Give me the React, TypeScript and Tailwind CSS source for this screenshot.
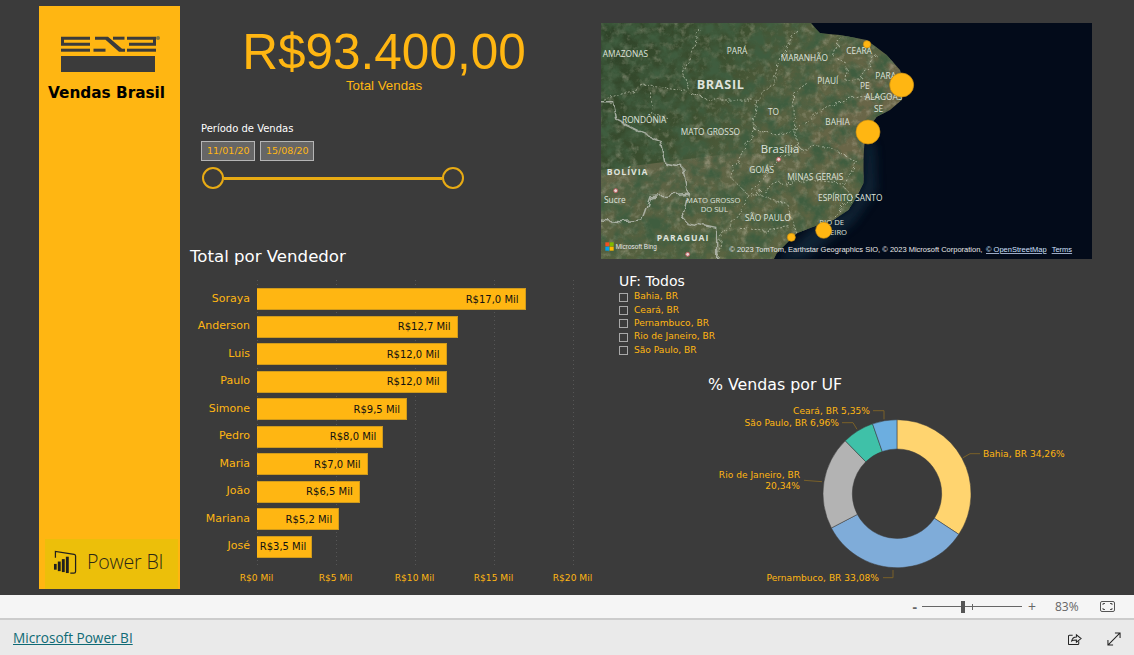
const sellers = [
  { name: 'Soraya', value: 17.0, label: 'R$17,0 Mil' },
  { name: 'Anderson', value: 12.7, label: 'R$12,7 Mil' },
  { name: 'Luis', value: 12.0, label: 'R$12,0 Mil' },
  { name: 'Paulo', value: 12.0, label: 'R$12,0 Mil' },
  { name: 'Simone', value: 9.5, label: 'R$9,5 Mil' },
  { name: 'Pedro', value: 8.0, label: 'R$8,0 Mil' },
  { name: 'Maria', value: 7.0, label: 'R$7,0 Mil' },
  { name: 'João', value: 6.5, label: 'R$6,5 Mil' },
  { name: 'Mariana', value: 5.2, label: 'R$5,2 Mil' },
  { name: 'José', value: 3.5, label: 'R$3,5 Mil' },
];

const axisTicks = ['R$0 Mil', 'R$5 Mil', 'R$10 Mil', 'R$15 Mil', 'R$20 Mil'];
const states = ['Bahia, BR', 'Ceará, BR', 'Pernambuco, BR', 'Rio de Janeiro, BR', 'São Paulo, BR'];

const slices = [
  { pct: 34.26, color: '#ffd46f' },
  { pct: 33.08, color: '#7facd9' },
  { pct: 20.34, color: '#b3b3b3' },
  { pct: 6.96, color: '#3fc1a8' },
  { pct: 5.35, color: '#6caee0' },
];

function EnsLogo() {
  return (
    <svg width="105" height="40" viewBox="0 0 105 40" fill="none">
      <g fill="#3b3b3b">
        <path d="M3 3.700h29v3H6v3h26v3H3z" />
        <path d="M3 15.700h29v3H3z" />
        <path d="M37 3.700h13l14 12h3v3h-6L47.500 6.700H37z" />
        <path d="M35.500 15.700h12v3h-12z" />
        <path d="M55 3.700h11.500v3H55z" />
        <path d="M69 3.700h29v9H71v-3h24v-3H69z" />
        <path d="M69 15.700h29v3H69z" />
        <rect x="3" y="23" width="94" height="16" />
      </g>
      <circle cx="100" cy="5" r="2" fill="#8a7a3a" />
    </svg>
  );
}

function PowerBiLogo() {
  return (
    <svg width="25" height="24" viewBox="0 0 26 25" fill="none">
      <path d="M2.500 8V1.500L22 4.500c1 .2 1.500.8 1.500 1.800v16c0 1-.7 1.700-1.700 1.700H18" stroke="#1f1f1f" strokeWidth="1.300" />
      <g fill="#1f1f1f">
        <rect x="1" y="14.500" width="2.800" height="6" />
        <rect x="5" y="12" width="3" height="10" />
        <rect x="9.200" y="9.500" width="3" height="13.500" />
        <rect x="13.400" y="7" width="3" height="17" />
      </g>
    </svg>
  );
}

function Sidebar() {
  return (
    <aside className="flex h-[583px] w-[141px] shrink-0 flex-col bg-[#ffb612]">
      <div className="mt-[27px] ml-[19px]">
        <EnsLogo />
      </div>
      <h1 className="mt-[10px] ml-[9px] font-['DejaVu_Sans',sans-serif] text-[15.300px] leading-[20px] font-bold whitespace-nowrap text-black">
        Vendas Brasil
      </h1>
      <div className="mt-auto ml-[6px] flex h-[50px] w-[133px] items-center gap-[9px] bg-[#ecbf0a] pb-[5px] pl-[8px]">
        <PowerBiLogo />
        <span className="font-['Open_Sans',sans-serif] text-[19.600px] leading-none font-light tracking-[-0.2px] whitespace-nowrap text-[#2b2716]">
          Power BI
        </span>
      </div>
    </aside>
  );
}

function PeriodSlicer() {
  return (
    <div className="mt-[29px] ml-[11px]">
      <div className="font-['DejaVu_Sans',sans-serif] text-[10px] leading-[14px] text-white">Período de Vendas</div>
      <div className="mt-[5px] flex gap-[5px]">
        {['11/01/20:', '15/08/20:'].map((d) => (
          <div
            key={d}
            className="h-[20px] w-[54px] border border-[#b5b5b5] bg-[#666666] py-[3px] pr-[4px] pl-[5px] font-['DejaVu_Sans',sans-serif] text-[9.500px] leading-[12px] whitespace-nowrap text-[#ffb612]"
          >
            <div className="overflow-hidden">{d}</div>
          </div>
        ))}
      </div>
      <div className="mt-[6px] ml-[1px] flex w-[262px] items-center">
        <span className="h-[22px] w-[22px] shrink-0 rounded-full border-2 border-[#e8ab14]" />
        <span className="h-[3px] flex-1 bg-[#e8ab14]" />
        <span className="h-[22px] w-[22px] shrink-0 rounded-full border-2 border-[#e8ab14]" />
      </div>
    </div>
  );
}

function SellerChart() {
  return (
    <div className="mt-[56px]">
      <h2 className="font-['DejaVu_Sans',sans-serif] text-[16.600px] leading-[24px] whitespace-nowrap text-white">
        Total por Vendedor
      </h2>
      <div className="relative mt-[11px] h-[285px]">
        {[67, 146, 225, 304, 383].map((x) => (
          <span
            key={x}
            className="absolute top-0 bottom-0 w-px bg-[repeating-linear-gradient(to_bottom,#565656_0,#565656_1px,transparent_1px,transparent_4px)]"
            style={{ left: x }}
          />
        ))}
        <div className="relative flex flex-col gap-[5.500px] pt-[8px]">
          {sellers.map((s) => (
            <div key={s.name} className="flex h-[22px] items-center">
              <span className="w-[60px] shrink-0 text-right font-['DejaVu_Sans',sans-serif] text-[11px] text-[#ffb612]">
                {s.name}
              </span>
              <div
                className="ml-[7px] flex h-[22px] items-center justify-end border-y border-r border-[#cf9a1c] bg-[#ffb612] font-['DejaVu_Sans',sans-serif] text-[10px] whitespace-nowrap text-[#111111]"
                style={{ width: s.value * 15.8, paddingRight: s.value < 4 ? 5 : 6 }}
              >
                {s.label}
              </div>
            </div>
          ))}
        </div>
      </div>
      <div className="mt-[7px] ml-[27px] flex w-[395px] justify-between font-['DejaVu_Sans',sans-serif] text-[9.100px] leading-[12px] text-[#ffb612]">
        {axisTicks.map((t) => (
          <span key={t} className="w-[79px] text-center whitespace-nowrap">
            {t}
          </span>
        ))}
      </div>
    </div>
  );
}

function BrazilMap() {
  const label = 'fill-[#dfe3dc] font-["Open_Sans",sans-serif]';
  return (
    <svg width="491" height="236" viewBox="3 9 1473 708" className="block shrink-0">
      <defs>
        <linearGradient id="land" x1="0" y1="0" x2="1" y2="0.3">
          <stop offset="0" stopColor="#2d4228" />
          <stop offset="0.28" stopColor="#3d5030" />
          <stop offset="0.46" stopColor="#5b6342" />
          <stop offset="0.6" stopColor="#6a6648" />
        </linearGradient>
        <linearGradient id="south" x1="0" y1="0" x2="1" y2="1">
          <stop offset="0" stopColor="#6d6a4f" stopOpacity="0.9" />
          <stop offset="1" stopColor="#4d6038" stopOpacity="0.5" />
        </linearGradient>
        <filter id="sat" filterUnits="userSpaceOnUse" x="0" y="0" width="1480" height="720">
          <feTurbulence type="fractalNoise" baseFrequency="0.022" numOctaves="5" seed="7" />
          <feColorMatrix values="0 0 0 0 0.05  0 0 0 0 0.11  0 0 0 0 0.05  2.600 0 0 0 -0.950" />
        </filter>
        <filter id="sat2" filterUnits="userSpaceOnUse" x="0" y="0" width="1480" height="720">
          <feTurbulence type="fractalNoise" baseFrequency="0.045" numOctaves="4" seed="19" />
          <feColorMatrix values="0 0 0 0 0.74  0 0 0 0 0.69  0 0 0 0 0.56  0 2.200 0 0 -1.050" />
        </filter>
        <filter id="wobble" filterUnits="userSpaceOnUse" x="0" y="0" width="1480" height="720">
          <feTurbulence type="fractalNoise" baseFrequency="0.035" numOctaves="2" seed="3" result="n" />
          <feDisplacementMap in="SourceGraphic" in2="n" scale="26" />
        </filter>
        <filter id="soft" filterUnits="userSpaceOnUse" x="0" y="0" width="1480" height="720">
          <feGaussianBlur stdDeviation="14" />
        </filter>
        <clipPath id="coast">
          <path d="M0 0H625L660 40 720 45 800 60 860 105 900 150 912 190 905 240 870 270 830 290 795 340 790 420 790 490 770 530 745 570 700 600 640 620 590 640 530 700 520 720H0Z" />
        </clipPath>
      </defs>
      <rect x="0" y="0" width="1480" height="720" fill="#030b1a" />
      <path d="M795 340 790 490 745 570 640 620 530 720H610L760 610 830 510 825 380Z" fill="#123044" opacity="0.6" filter="url(#soft)" />
      <g clipPath="url(#coast)">
        <rect x="0" y="0" width="1480" height="720" fill="url(#land)" />
        <path d="M0 450 400 400 800 420 760 720H0Z" fill="url(#south)" />
        <rect x="0" y="0" width="1480" height="720" filter="url(#sat2)" opacity="0.4" />
        <rect x="0" y="0" width="1480" height="720" filter="url(#sat)" />
      </g>
      <g filter="url(#wobble)">
        <g fill="none" stroke="#d8dccb" strokeWidth="2.500" strokeDasharray="6 5" opacity="0.75">
          <path d="M300 30 250 160 270 215 130 195 90 215 0 240" />
          <path d="M270 215 330 240 470 240 460 330 390 470 450 530 360 660 350 716" />
          <path d="M590 30 540 110 520 190 470 240" />
          <path d="M720 50 700 110 740 130 735 180 780 180 830 105" />
          <path d="M620 190 580 220 585 340 600 385 530 420 450 520 560 550 580 610 590 640" />
          <path d="M460 325 530 345 580 330 680 260 780 230 880 230" />
          <path d="M600 385 680 380 770 425 730 500 760 530 700 590" />
          <path d="M450 530 540 490 640 480 730 490" />
          <path d="M420 625 490 630 570 620" />
          <path d="M155 220V280L200 290" />
        </g>
        <g fill="none" stroke="#b7bcb2" strokeWidth="4.500" opacity="0.85">
          <path d="M0 245H40L50 300 130 340 180 360 195 430 250 440 265 520 250 580 255 605 350 625 350 716" />
          <path d="M265 520 150 530 125 600 60 605 0 600" />
        </g>
      </g>
      <g fontSize="25" className={label}>
        <text x="8" y="112">AMAZONAS</text>
        <text x="380" y="103">PARÁ</text>
        <text x="542" y="122">MARANHÃO</text>
        <text x="739" y="103">CEARÁ</text>
        <text x="652" y="192">PIAUÍ</text>
        <text x="826" y="178">PARA</text>
        <text x="780" y="207">PE</text>
        <text x="795" y="241">ALAGOAS</text>
        <text x="822" y="276">SE</text>
        <text x="504" y="284">TO</text>
        <text x="676" y="316">BAHIA</text>
        <text x="66" y="310">RONDÔNIA</text>
        <text x="242" y="346">MATO GROSSO</text>
        <text x="448" y="460">GOIÁS</text>
        <text x="562" y="479">MINAS GERAIS</text>
        <text x="654" y="544">ESPÍRITO SANTO</text>
        <text x="258" y="550" fontSize="23">MATO GROSSO</text>
        <text x="302" y="577" fontSize="23">DO SUL</text>
        <text x="435" y="604">SÃO PAULO</text>
        <text x="658" y="614" fontSize="23">RIO DE</text>
        <text x="690" y="645" fontSize="23">EIRO</text>
        <text x="12" y="548">Sucre</text>
      </g>
      <text x="290" y="206" fontSize="38" fontWeight="700" letterSpacing="2" className={label}>BRASIL</text>
      <text x="482" y="400" fontSize="34" className={label}>Brasília</text>
      <text x="20" y="464" fontSize="26" fontWeight="700" letterSpacing="3" className={label}>BOLÍVIA</text>
      <text x="170" y="662" fontSize="26" fontWeight="700" letterSpacing="3" className={label}>PARAGUAI</text>
      <circle cx="536" cy="418" r="6" fill="#e9d5d5" stroke="#b85a5a" strokeWidth="3" />
      <circle cx="47" cy="512" r="6" fill="#e9d5d5" stroke="#b85a5a" strokeWidth="3" />
      <circle cx="263" cy="703" r="6" fill="#e9d5d5" stroke="#b85a5a" strokeWidth="3" />
      <g fill="#ffb612" stroke="#c98c10" strokeWidth="2">
        <circle cx="801" cy="73" r="11" />
        <circle cx="905" cy="195" r="36" />
        <circle cx="804" cy="336" r="36" />
        <circle cx="671" cy="631" r="24" />
        <circle cx="574" cy="652" r="12" />
      </g>
      <g>
        <rect x="16" y="667" width="12" height="12" fill="#f25022" />
        <rect x="29" y="667" width="12" height="12" fill="#7fba00" />
        <rect x="16" y="680" width="12" height="12" fill="#00a4ef" />
        <rect x="29" y="680" width="12" height="12" fill="#ffb900" />
        <text x="47" y="687" fontSize="19.500" fill="#e8e8e8" className="font-['Liberation_Sans',sans-serif]">Microsoft Bing</text>
      </g>
      <g fontSize="22.500" fill="#e8e8e8" className="font-['Liberation_Sans',sans-serif]">
        <text x="388" y="696">© 2023 TomTom, Earthstar Geographics SIO, © 2023 Microsoft Corporation,</text>
        <text x="1158" y="696" fill="#cfe0ff" textDecoration="underline">© OpenStreetMap</text>
        <text x="1355" y="696" fill="#cfe0ff" textDecoration="underline">Terms</text>
      </g>
    </svg>
  );
}

function UfSlicer() {
  return (
    <div className="mt-[13px] ml-[18px]">
      <div className="font-['DejaVu_Sans',sans-serif] text-[14px] leading-[18px] text-white">UF: Todos</div>
      <ul className="mt-[2px] flex flex-col gap-[2.800px]">
        {states.map((s) => (
          <li key={s} className="flex h-[10.500px] items-center gap-[6px] font-['DejaVu_Sans',sans-serif] text-[9.100px] whitespace-nowrap text-[#ffb612]">
            <span className="h-[9px] w-[9px] border border-[#a8a8a8]" />
            {s}
          </li>
        ))}
      </ul>
    </div>
  );
}

function arcPath(from: number, to: number) {
  const cx = 150;
  const cy = 112.7;
  const R = 74;
  const r = 44.7;
  const pt = (p: number, rad: number) => {
    const a = (p / 100) * Math.PI * 2;
    return `${(cx + rad * Math.sin(a)).toFixed(2)} ${(cy - rad * Math.cos(a)).toFixed(2)}`;
  };
  const large = to - from > 50 ? 1 : 0;
  return `M${pt(from, R)}A${R} ${R} 0 ${large} 1 ${pt(to, R)}L${pt(to, r)}A${r} ${r} 0 ${large} 0 ${pt(from, r)}Z`;
}

function UfDonut() {
  let acc = 0;
  const paths = slices.map((s) => {
    const d = arcPath(acc, acc + s.pct);
    acc += s.pct;
    return <path key={s.color} d={d} fill={s.color} stroke="#3b3b3b" strokeWidth="0.500" />;
  });
  return (
    <div className="mt-[19px] ml-[107px]">
      <h2 className="font-['DejaVu_Sans',sans-serif] text-[15.800px] leading-[20px] whitespace-nowrap text-white">
        % Vendas por UF
      </h2>
      <svg width="400" height="204" viewBox="0 0 400 204" className="-mt-[4px] block">
        <g transform="translate(39 -10)">{paths}</g>
        <g fill="none" stroke="#7a6128" strokeWidth="1">
          <path d="M165 19.700H176V28.300" />
          <path d="M134 31.700H145L149 38.300" />
          <path d="M255 66.700 262 62.700H272" />
          <path d="M96 89.300 114 90.700" />
          <path d="M175 186.700H185V179" />
        </g>
        <g fontSize="9.100" fill="#ffb612" className="font-['DejaVu_Sans',sans-serif]">
          <text x="162" y="22.500" textAnchor="end">Ceará, BR 5,35%</text>
          <text x="131" y="35" textAnchor="end">São Paulo, BR 6,96%</text>
          <text x="275" y="66">Bahia, BR 34,26%</text>
          <text x="92" y="86.500" textAnchor="end">Rio de Janeiro, BR</text>
          <text x="92" y="98" textAnchor="end">20,34%</text>
          <text x="171" y="190" textAnchor="end">Pernambuco, BR 33,08%</text>
        </g>
      </svg>
    </div>
  );
}

function ZoomBar() {
  return (
    <div className="flex h-[23px] items-center justify-end bg-[#f5f5f5] pr-[19px] font-['Open_Sans',sans-serif] text-[12px] text-[#666666]">
      <span className="mr-[5px] text-[14px] leading-none font-bold">-</span>
      <div className="relative flex h-[12px] w-[100px] items-center">
        <span className="h-px w-full bg-[#666666]" />
        <span className="absolute left-[39px] h-[12px] w-[4px] bg-[#555555]" />
        <span className="absolute left-[50px] h-[6px] w-px bg-[#666666]" />
      </div>
      <span className="ml-[6px] text-[14px] leading-none">+</span>
      <span className="ml-[19px] w-[24px]">83%</span>
      <svg className="ml-[21px]" width="15" height="11" viewBox="0 0 15 11" fill="none" stroke="#555555">
        <rect x="0.500" y="0.500" width="14" height="10" rx="1.500" />
        <path d="M3 4V2.500H5M10 2.500h2V4M12 7v1.500h-2M5 8.500H3V7" />
      </svg>
    </div>
  );
}

function Footer() {
  return (
    <div className="flex flex-1 items-center justify-between border-t-2 border-[#cccccc] bg-[#eaeaea] pt-[2px] pr-[13px] pl-[13px]">
      <a href="#" className="font-['Open_Sans',sans-serif] text-[13.600px] text-[#0f6a75] underline">
        Microsoft Power BI
      </a>
      <div className="flex items-center gap-[25px]">
        <svg width="14" height="14" viewBox="0 0 15 15" fill="none" stroke="#222222" strokeWidth="1.100">
          <path d="M5 3.500H1.500a1 1 0 0 0-1 1v8a1 1 0 0 0 1 1h9a1 1 0 0 0 1-1V10" />
          <path d="M4 9.500C4.500 6.800 6.500 5.300 9 5.300V3l5 4-5 4V8.500c-2 0-3.800 0-5 1Z" />
        </svg>
        <svg width="14" height="14" viewBox="0 0 15 15" fill="none" stroke="#222222" strokeWidth="1.100">
          <path d="M14 1 1 14M8.500 1H14v5.500M1 8.500V14h5.500" />
        </svg>
      </div>
    </div>
  );
}

export default function App() {
  return (
    <div className="flex h-[655px] w-[1134px] flex-col overflow-hidden bg-[#3b3b3b]">
      <div className="flex h-[595px] shrink-0 pt-[6px] pl-[39px]">
        <Sidebar />
        <div className="ml-[10px] w-[411px] shrink-0">
          <div className="flex w-[388px] flex-col items-center pt-[18px]">
            <div className="font-['Liberation_Sans',sans-serif] text-[49.500px] leading-[55px] whitespace-nowrap text-[#ffb612]">
              R$93.400,00
            </div>
            <div className="font-['Liberation_Sans',sans-serif] text-[13.300px] leading-[14px] text-[#ffb612]">
              Total Vendas
            </div>
          </div>
          <PeriodSlicer />
          <SellerChart />
        </div>
        <div className="flex flex-col pt-[17px]">
          <BrazilMap />
          <UfSlicer />
          <UfDonut />
        </div>
      </div>
      <ZoomBar />
      <Footer />
    </div>
  );
}
